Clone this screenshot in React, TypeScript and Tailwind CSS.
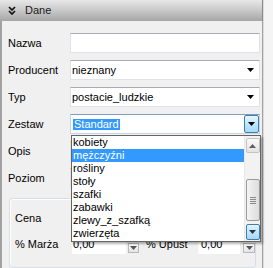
const items = [
  "kobiety",
  "mężczyźni",
  "rośliny",
  "stoły",
  "szafki",
  "zabawki",
  "zlewy_z_szafką",
  "zwierzęta",
];

const Arrow = ({ up = false, color = "#000" }: { up?: boolean; color?: string }) => (
  <svg width="7" height="4" viewBox="0 0 7 4" className={up ? "rotate-180" : ""}>
    <path d="M0 0H7L3.5 4Z" fill={color} />
  </svg>
);

const Field = ({ children, select = false }: { children?: React.ReactNode; select?: boolean }) => (
  <div className="w-[190px] h-[20px] bg-white border border-[#dfe3e8] border-t-[#a9abb0] flex items-center pl-[1px] pr-[5px]">
    <span className="flex-1 truncate">{children}</span>
    {select && <Arrow />}
  </div>
);

const Row = ({ label, children }: { label: string; children?: React.ReactNode }) => (
  <div className="flex items-center h-[20px]">
    <span className="w-[62px] shrink-0">{label}</span>
    {children}
  </div>
);

const SmallButton = ({ w }: { w: string }) => (
  <div className={`${w} h-[10px] self-end mb-[1px] bg-linear-to-b from-[#fbfbfb] to-[#e4e4e4] border border-[#b9b9b9] flex items-center justify-center`}>
    <Arrow color="#555" />
  </div>
);

export default function App() {
  return (
    <div
      className="relative w-[273px] h-[268px] overflow-hidden flex bg-[#f4f4f4] text-[11px] text-black"
      style={{ fontFamily: '"Liberation Sans", Arial, sans-serif' }}
    >
      <div className="w-[263px] shrink-0 flex flex-col">
        <div className="h-[21px] flex items-center gap-[9px] pl-[8px] bg-linear-to-b from-[#e8e8e8] via-[#c8c8c8] to-[#a6a6a6] border-r border-[#8a8a8a]">
          <svg width="8" height="9" viewBox="0 0 8 9">
            <path d="M1 1L4 4L7 1M1 5L4 8L7 5" fill="none" stroke="#111" strokeWidth="1.7" />
          </svg>
          <span className="text-[#1a1a1a]">Dane</span>
        </div>
        <div className="flex-1 bg-[#f0f0f0] border-l-2 border-r border-[#a2a2a2] pl-[6px] pt-[12px] flex flex-col gap-[7px]">
          <Row label="Nazwa">
            <Field />
          </Row>
          <Row label="Producent">
            <Field select>nieznany</Field>
          </Row>
          <Row label="Typ">
            <Field select>postacie_ludzkie</Field>
          </Row>
          <Row label="Zestaw">
            <div className="w-[190px] h-[20px] bg-white border border-[#c5d6e6] border-t-[#7f9db9] flex items-center pl-[2px]">
              <span className="flex-1">
                <span className="bg-[#3399ff] text-white px-[1px] leading-[11px] inline-block">Standard</span>
              </span>
              <div className="w-[15px] h-[18px] bg-linear-to-b from-[#eaf6fd] via-[#bee6fd] to-[#a7d9f5] border border-[#3c7fb1] rounded-[2px] flex items-center justify-center">
                <Arrow />
              </div>
            </div>
          </Row>
          <Row label="Opis">
            <Field />
          </Row>
          <Row label="Poziom">
            <Field />
          </Row>
          <div className="mt-[3px] ml-[1px] mr-[6px] flex-1 border border-[#d5dfe5] rounded-[3px] shadow-[inset_1px_1px_0_#fff] pl-[5px] pt-[9px] flex flex-col gap-[6px]">
            <div className="flex items-center h-[20px]">
              <span className="w-[57px]">Cena</span>
              <div className="w-[54px] h-[20px] bg-white" />
            </div>
            <div className="flex items-center h-[20px]">
              <span className="w-[57px]">% Marża</span>
              <div className="w-[54px] h-[20px] bg-white pl-[1px] flex items-center">0,00</div>
              <div className="ml-[2px] flex h-[20px]">
                <SmallButton w="w-[11px]" />
              </div>
              <span className="ml-[7px] w-[52px]">% Upust</span>
              <div className="w-[42px] h-[20px] bg-white pl-[3px] flex items-center">0,00</div>
              <div className="ml-[3px] flex h-[20px]">
                <SmallButton w="w-[12px]" />
              </div>
            </div>
          </div>
        </div>
      </div>
      <div className="flex-1 border-l border-[#dcdcdc]" />

      <div className="absolute left-[71px] top-[135px] w-[190px] h-[107px] bg-white border border-[#646464] shadow-[2px_2px_2px_rgba(0,0,0,0.3)] flex">
        <div className="flex-1 flex flex-col">
          {items.map((it, i) => (
            <div
              key={it}
              className={`h-[13px] leading-[13px] pl-[1px] ${i === 1 ? "bg-[#3399ff] text-white" : ""}`}
            >
              {it}
            </div>
          ))}
        </div>
        <div className="w-[16px] bg-[#f2f2f2] border-l border-[#e8e8e8] flex flex-col items-center py-[1px]">
          <div className="w-[14px] h-[15px] mt-[1px] rounded-[2px] border border-[#c4c4c4] bg-linear-to-b from-[#fafafa] to-[#e2e2e2] flex items-center justify-center">
            <Arrow up color="#606060" />
          </div>
          <div className="h-[26px]" />
          <div className="w-[14px] h-[42px] rounded-[2px] border border-[#9a9a9a] bg-linear-to-r from-[#f4f4f4] to-[#dcdcdc] flex flex-col items-center justify-center gap-[1px]">
            <div className="w-[6px] h-[1px] bg-[#8a8a8a]" />
            <div className="w-[6px] h-[1px] bg-[#8a8a8a]" />
            <div className="w-[6px] h-[1px] bg-[#8a8a8a]" />
            <div className="w-[6px] h-[1px] bg-[#8a8a8a]" />
          </div>
          <div className="flex-1" />
          <div className="w-[14px] h-[16px] rounded-[2px] border border-[#3c7fb1] bg-linear-to-b from-[#e3f3fc] to-[#a9d6f2] flex items-center justify-center">
            <Arrow color="#1c3a52" />
          </div>
        </div>
      </div>
    </div>
  );
}
